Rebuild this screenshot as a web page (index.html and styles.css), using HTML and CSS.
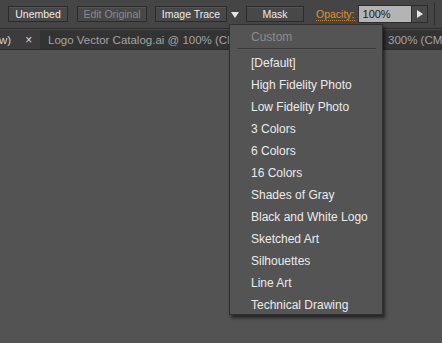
FILE: index.html
```html
<!DOCTYPE html>
<html>
<head>
<meta charset="utf-8">
<link rel="stylesheet" href="styles.css">
</head>
<body>
<div class="app">
  <div class="toolbar">
    <button class="btn w-unembed">Unembed</button>
    <button class="btn btn-disabled w-edit">Edit Original</button>
    <button class="btn w-trace">Image Trace</button>
    <span class="drop-arrow"></span>
    <button class="btn w-mask">Mask</button>
    <span class="opacity-label">Opacity:</span>
    <span class="opacity-field">100%</span>
    <span class="opacity-step"><span class="step-tri"></span></span>
    <span class="vsep"></span>
  </div>
  <div class="tabs">
    <div class="tab tab-first"><span class="tab-text">w)</span><span class="tab-close">×</span></div>
    <div class="tab tab-second"><span class="tab-text">Logo Vector Catalog.ai @ 100% (CMYK/Preview)</span></div>
    <div class="tab tab-third"><span class="tab-text">300% (CMYK/Preview)</span></div>
  </div>
  <div class="canvas"></div>

  <div class="menu">
    <div class="menu-item menu-disabled">Custom</div>
    <div class="menu-sep"></div>
    <div class="menu-item">[Default]</div>
    <div class="menu-item">High Fidelity Photo</div>
    <div class="menu-item">Low Fidelity Photo</div>
    <div class="menu-item">3 Colors</div>
    <div class="menu-item">6 Colors</div>
    <div class="menu-item">16 Colors</div>
    <div class="menu-item">Shades of Gray</div>
    <div class="menu-item">Black and White Logo</div>
    <div class="menu-item">Sketched Art</div>
    <div class="menu-item">Silhouettes</div>
    <div class="menu-item">Line Art</div>
    <div class="menu-item">Technical Drawing</div>
  </div>
</div>
</body>
</html>
```

FILE: styles.css
```css
html, body {
  margin: 0;
  padding: 0;
  background: #535353;
  font-family: "Liberation Sans", Arial, sans-serif;
}
.app {
  position: relative;
  width: 442px;
  height: 343px;
  overflow: hidden;
  display: flex;
  flex-direction: column;
}
.toolbar {
  height: 28px;
  flex: 0 0 28px;
  background: #454545;
  border-bottom: 1px solid #2a2a2a;
  display: flex;
  align-items: center;
  padding-left: 8px;
  box-sizing: content-box;
}
.btn {
  height: 16px;
  box-sizing: border-box;
  border: 1px solid #2b2b2b;
  background: #484848;
  box-shadow: inset 0 1px 0 #555;
  color: #ececec;
  font-family: "Liberation Sans", Arial, sans-serif;
  font-size: 10.5px;
  padding: 0;
  margin: 0;
  line-height: 13px;
  text-align: center;
}
.btn-disabled { color: #8a8a8a; }
.w-unembed { width: 60px; margin-right: 9px; }
.w-edit { width: 70px; margin-right: 8px; }
.w-trace { width: 72px; }
.drop-arrow {
  width: 0; height: 0;
  margin-left: 4px;
  border-left: 4px solid transparent;
  border-right: 4px solid transparent;
  border-top: 6px solid #e6e6e6;
  margin-right: 7px;
  margin-top: 1px;
}
.w-mask { width: 58px; margin-right: 12px; }
.opacity-label {
  color: #e0912d;
  font-size: 10.5px;
  border-bottom: 1px dotted #c9832c;
  line-height: 12px;
  margin-right: 3px;
  margin-top: 1px;
}
.opacity-field {
  width: 54px;
  height: 18px;
  box-sizing: border-box;
  background: #b4b4b4;
  border: 1px solid #2c2c2c;
  color: #1a1a1a;
  font-size: 11px;
  line-height: 16px;
  padding-left: 4px;
}
.opacity-step {
  width: 16px;
  height: 18px;
  box-sizing: border-box;
  background: #4a4a4a;
  border: 1px solid #2c2c2c;
  border-left: none;
  display: flex;
  align-items: center;
  justify-content: center;
}
.step-tri {
  width: 0; height: 0;
  border-top: 4px solid transparent;
  border-bottom: 4px solid transparent;
  border-left: 6px solid #e6e6e6;
  margin-left: 1px;
}
.vsep {
  width: 1px;
  height: 22px;
  background: #2e2e2e;
  margin-left: 6px;
}
.tabs {
  height: 19px;
  flex: 0 0 19px;
  background: #333333;
  border-top: 1px solid #4a4a4a;
  border-bottom: 1px solid #2a2a2a;
  display: flex;
  overflow: hidden;
}
.tab {
  display: flex;
  align-items: center;
  white-space: nowrap;
  font-size: 11.5px;
  color: #a3a3a3;
  overflow: hidden;
}
.tab-first {
  width: 40px;
  flex: 0 0 40px;
  background: #3c3c3c;
  color: #d0d0d0;
}
.tab-first .tab-text { margin-left: -1px; }
.tab-close {
  margin-left: 14px;
  font-size: 12px;
  color: #d8d8d8;
}
.tab-second {
  width: 340px;
  flex: 0 0 340px;
  padding-left: 8px;
  box-sizing: border-box;
}
.tab-third {
  flex: 1 1 auto;
  padding-left: 7px;
  border-left: 1px solid #2a2a2a;
}
.canvas {
  flex: 1 1 auto;
  background: #535353;
}
.menu {
  position: absolute;
  left: 229px;
  top: 24px;
  width: 154px;
  height: 291px;
  box-sizing: border-box;
  padding-top: 1px;
  background: #545454;
  border: 1px solid #2f2f2f;
  box-shadow: 2px 3px 3px rgba(0,0,0,0.55);
}
.menu-item {
  height: 22px;
  line-height: 22px;
  padding-left: 21px;
  font-size: 12px;
  color: #ebebeb;
  white-space: nowrap;
}
.menu-disabled { color: #8c8c8c; }
.menu-sep {
  height: 1px;
  background: #3a3a3a;
  border-bottom: 1px solid #5c5c5c;
  margin: 0 6px 2px 7px;
}
```
